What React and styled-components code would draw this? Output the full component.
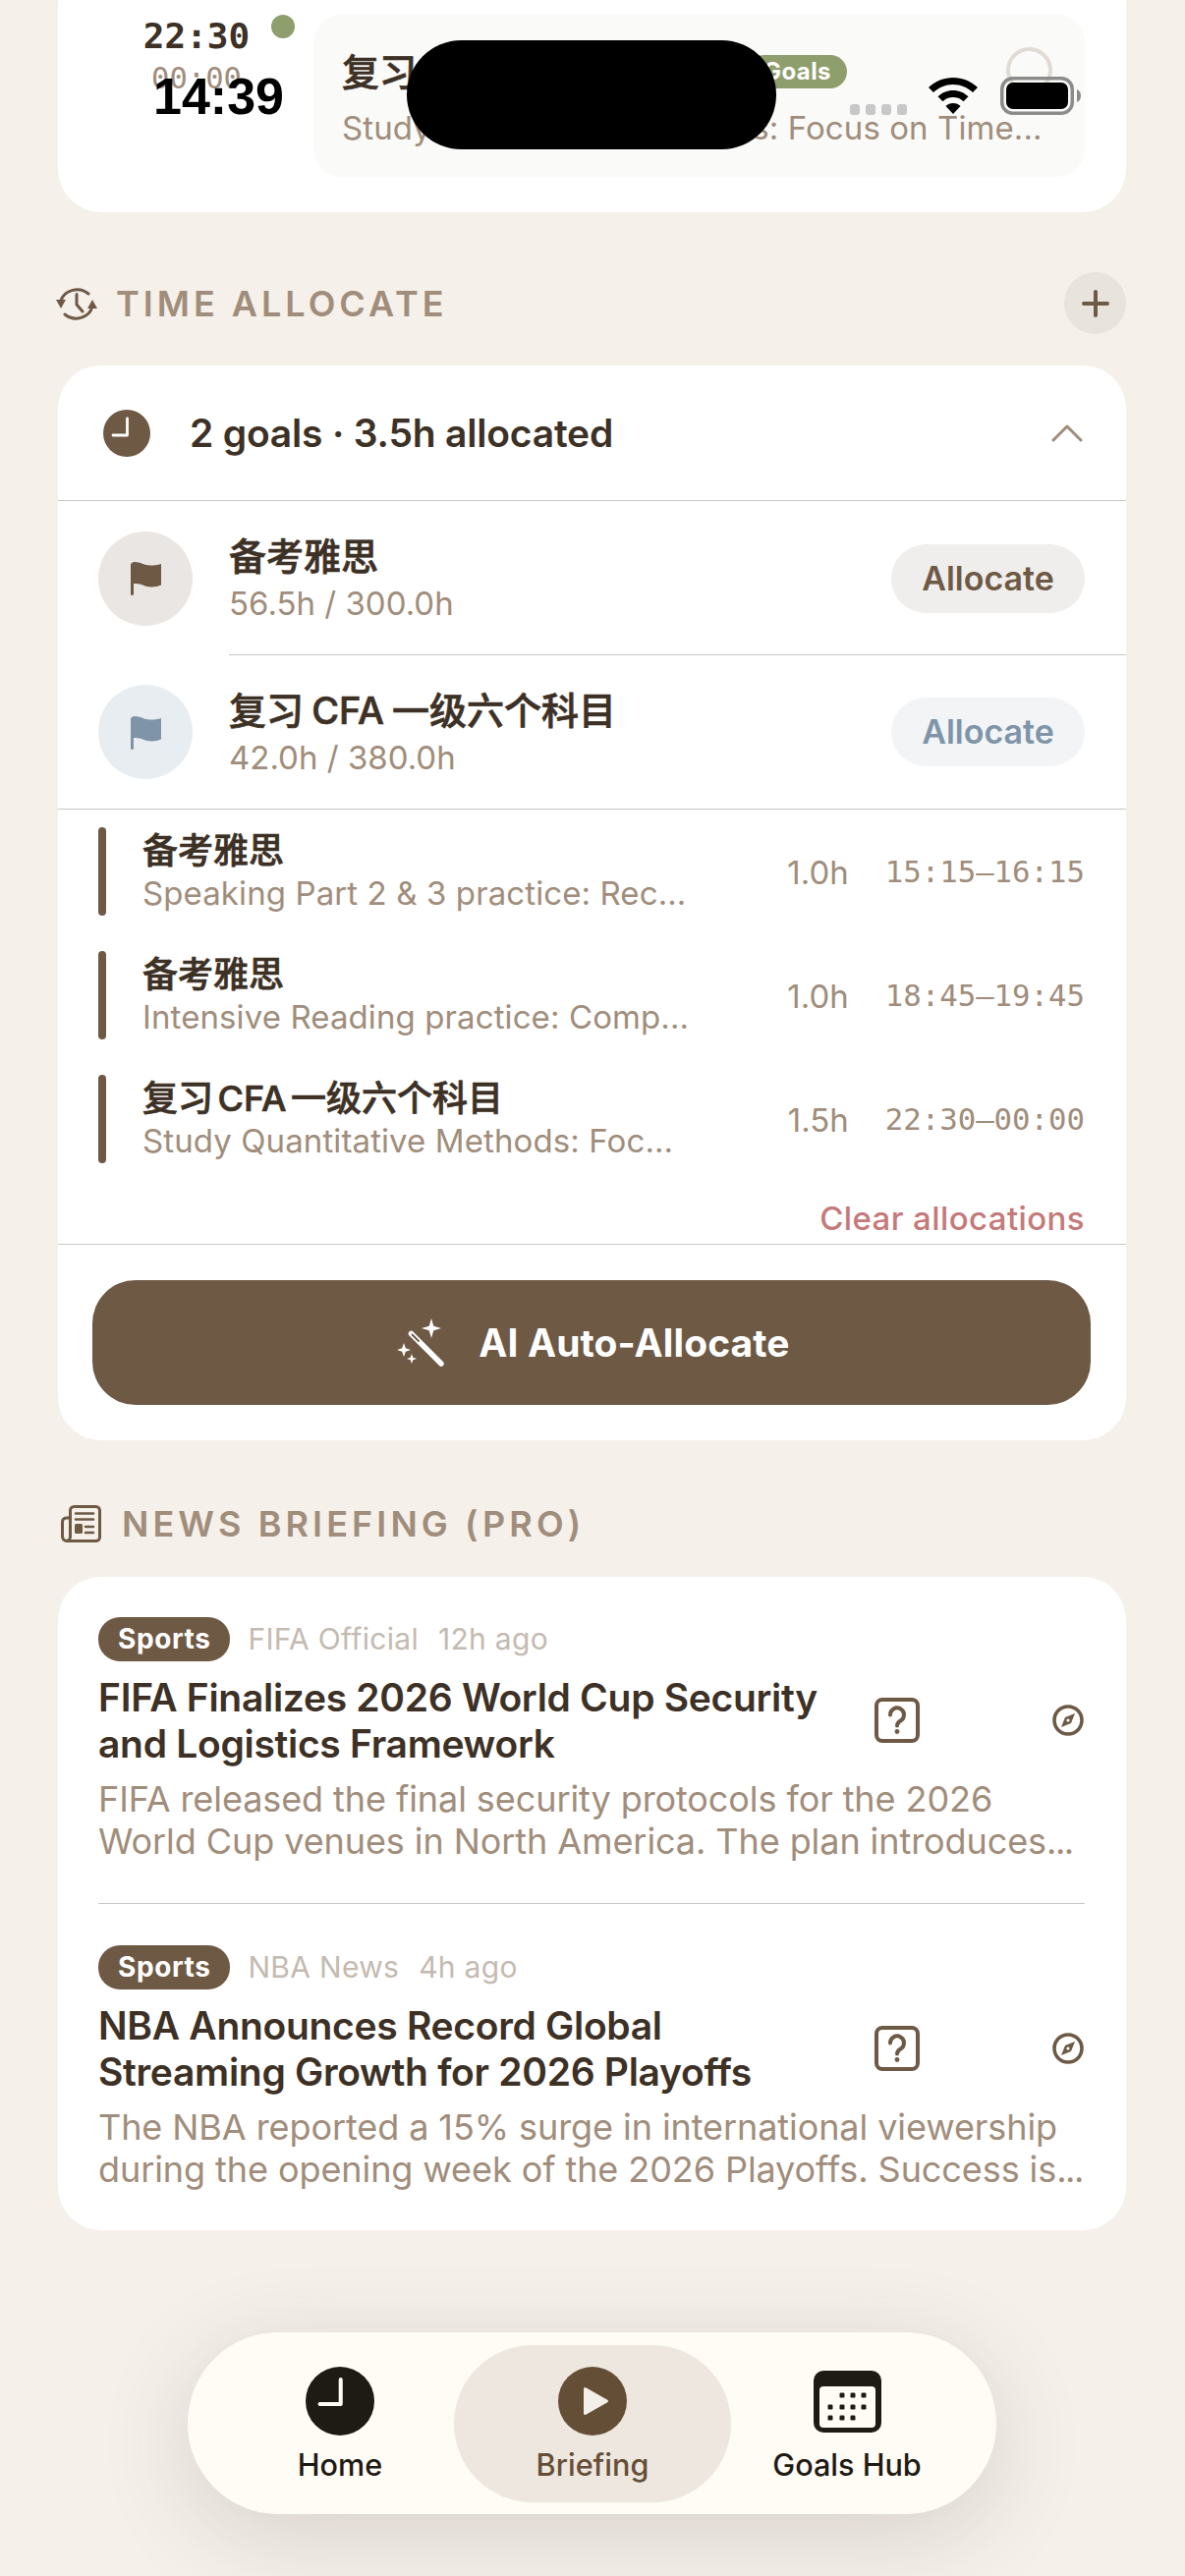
import React from 'react';
import styled, { createGlobalStyle } from 'styled-components';

const Global = createGlobalStyle`
  html, body { margin: 0; padding: 0; background: #f5f0ea; }
  * { box-sizing: border-box; }
`;
const sans = `Inter, "Noto Sans CJK SC", sans-serif`;
const mono = `"DejaVu Sans Mono", monospace`;
const brown = '#6e5945';
const line = '#c8c6c4';
const Page = styled.div`
  position: relative; width: 1206px; height: 2622px; overflow: hidden;
  background: #f5f0ea; font-family: ${sans}; color: #3d3126;
  padding: 0 60px 0 59px;
`;
const Card = styled.section`
  background: #fff; border-radius: 44px; overflow: hidden;
`;
const TopCard = styled(Card)`
  margin-top: -40px; padding: 55px 42px 36px 81px; height: 256px;
  display: flex;
`;
const TimeCol = styled.div`
  width: 120px; display: flex; flex-direction: column; align-items: center; padding-top: 2px;
`;
const TimeStart = styled.div`font: 700 36px/40px ${mono}; color: #3d3126;`;
const TimeEnd = styled.div`font: 400 30.500px/36px ${mono}; color: #a08d7b; margin-top: 5px;`;
const Dot = styled.div`
  width: 24px; height: 24px; border-radius: 50%; background: #8f9e6d; margin: 0 19px 0 16px; flex: none;
`;
const Inner = styled.div`
  flex: 1; min-width: 0; height: 165px; background: #fafaf8; border-radius: 28px;
  padding: 36px 30px 0 29px; display: flex; position: relative;
`;
const InnerText = styled.div`flex: 1; min-width: 0;`;
const InnerTitle = styled.div`
  display: flex; align-items: center; font: 500 38px/44px ${sans}; color: #3d3126; gap: 19px; word-spacing: -2px;
`;
const TitleInk = styled.span`-webkit-text-stroke: .7px #3d3126;`;
const GoalChip = styled.span`
  font: 700 24px/34px ${sans}; color: #fff; background: #8f9e6d; border-radius: 17px; padding: 0 16px; letter-spacing: .4px;
`;
const InnerSub = styled.div`
  font: 400 33px/40px ${sans}; color: #a08d7b; margin-top: 15px; white-space: nowrap; letter-spacing: .08px;
`;
const Ring = styled.div`
  width: 47px; height: 47px; border: 4px solid #e0dbd5; border-radius: 50%;
  position: absolute; right: 33px; top: 33px;
`;
const SectionHead = styled.header`
  display: flex; align-items: center; height: 63px;
`;
const AllocHead = styled(SectionHead)`margin: 61px 0 32px; gap: 19px;`;
const NewsHead = styled(SectionHead)`margin: 53px 0 23px; padding-left: 3px; gap: 20px;`;
const SectionTitle = styled.h2`
  margin: 0; flex: 1; font: 600 36px/44px ${sans}; letter-spacing: ${p => p.$ls}px; color: #a08d7b;
`;
const RoundAdd = styled.button`
  width: 63px; height: 63px; border-radius: 50%; border: 0; background: #e9e3dd; padding: 0;
  display: flex; align-items: center; justify-content: center; color: ${brown};
`;
const SummaryRow = styled.div`
  display: flex; align-items: center; height: 138px; padding: 0 44px 0 46px; border-bottom: 1px solid ${line};
`;
const SummaryText = styled.div`flex: 1; margin-left: 40px; font: 600 39px/48px ${sans}; color: #3d3126; letter-spacing: -.2px;`;
const GoalRow = styled.div`
  display: flex; align-items: center; height: 157px; padding: 0 42px 0 41px; position: relative;
  ${p => p.$line === 'inset' ? `&::after{content:"";position:absolute;left:174px;right:0;bottom:0;height:1px;background:${line};}` : ''}
  ${p => p.$line === 'full' ? `border-bottom: 1px solid ${line};` : ''}
`;
const Avatar = styled.div`
  width: 96px; height: 96px; border-radius: 50%; flex: none; background: ${p => p.$bg};
  display: flex; align-items: center; justify-content: center;
`;
const GoalText = styled.div`flex: 1; margin-left: 37px;`;
const GoalName = styled.div`font: 500 38px/46px ${sans}; color: #3d3126; word-spacing: -2px; -webkit-text-stroke: .7px #3d3126;`;
const GoalMeta = styled.div`font: 400 33px/40px ${sans}; color: #a08d7b; margin-top: 5px;`;
const AllocBtn = styled.button`
  width: 197px; height: 70px; border-radius: 35px; border: 0; background: ${p => p.$bg}; color: ${p => p.$fg};
  font: 600 34px/40px ${sans}; padding: 0;
`;
const AllocList = styled.div`padding: 18px 42px 0 41px; display: flex; flex-direction: column; gap: 36px;`;
const AllocRow = styled.div`display: flex; align-items: center; height: 90px;`;
const Bar = styled.div`width: 8px; height: 90px; border-radius: 4px; background: ${brown}; flex: none;`;
const AllocText = styled.div`width: 600px; margin-left: 37px; flex: none;`;
const AllocName = styled.div`font: 500 36px/42px ${sans}; color: #3d3126; word-spacing: -5px; -webkit-text-stroke: .7px #3d3126;`;
const AllocDesc = styled.div`
  font: 400 33px/40px ${sans}; color: #a08d7b; margin-top: 2px; white-space: nowrap; letter-spacing: .1px;
`;
const Hours = styled.div`font: 400 33px/36px ${sans}; color: #a08d7b; margin: 2px 0 0 auto;`;
const Range = styled.div`font: 400 30.700px/36px ${mono}; color: #a08d7b; margin: 2px 0 0 37px; white-space: nowrap;`;
const ClearRow = styled.div`
  padding: 0 42px 0 0; margin-top: 33px; height: 46px; text-align: right;
  font: 500 33px/46px ${sans}; color: #c47a7a; letter-spacing: .4px;
`;
const Rule = styled.div`height: 1px; background: ${line}; margin-top: ${p => p.$mt || 0}px;`;
const MagicBtn = styled.button`
  display: flex; align-items: center; justify-content: center; gap: 33px;
  width: 1016px; height: 127px; margin: 36px 35px; border: 0; border-radius: 44px;
  background: ${brown}; color: #fff; font: 700 39px/48px ${sans}; padding: 0 0 0 4px; letter-spacing: .1px;
`;
const NewsCard = styled(Card)`padding: 41px 42px 0 41px; height: 665px;`;
const NewsItem = styled.article`
  height: 334px; position: relative;
`;
const Divider = styled.div`height: 1px; background: ${line}; position: absolute; left: 0; right: 0; top: 291px;`;
const Meta = styled.div`display: flex; align-items: center; height: 45px;`;
const Chip = styled.span`
  height: 45px; border-radius: 22px; background: ${brown}; color: #fff; padding: 0 20px;
  font: 700 28px/45px ${sans}; letter-spacing: .6px;
`;
const Source = styled.span`font: 400 30px/45px ${sans}; color: #c4bab0; margin-left: 18px; letter-spacing: .3px;`;
const Age = styled(Source)`margin-left: 20px;`;
const TitleRow = styled.div`display: flex; align-items: center; margin-top: 13px;`;
const NewsTitle = styled.h3`
  margin: 0; width: 750px; font: 600 39px/47px ${sans}; color: #3d3126; letter-spacing: -.3px;
`;
const IconCell = styled.div`display: flex; justify-content: center; width: ${p => p.$w}px; flex: none; margin-left: ${p => p.$ml}px;`;
const NewsDesc = styled.p`
  margin: 12px 0 0; font: 400 36px/43px ${sans}; color: #a08d7b; white-space: pre; letter-spacing: -.08px;
`;
const Dots = styled.span`letter-spacing: -1.500px;`;
const Nav = styled.nav`
  position: absolute; left: 191px; top: 2374px; width: 823px; height: 185px; border-radius: 92px;
  background: #fffbf5; box-shadow: 0 20px 90px rgba(70,60,45,.17);
`;
const NavItem = styled.div`
  position: absolute; top: 13px; height: 160px; border-radius: 80px;
  display: flex; flex-direction: column; align-items: center; padding-top: 22px;
  left: ${p => p.$left}px; width: ${p => p.$w}px;
  background: ${p => p.$active ? '#ede7e0' : 'transparent'};
  color: ${p => p.$active ? '#654e36' : '#1e1a14'};
`;
const NavIcon = styled.div`height: 70px; display: flex; align-items: center;`;
const NavLabel = styled.div`font: 500 30.600px/36px ${sans}; margin-top: 12px; white-space: nowrap;`;
const StatusBar = styled.div`position: absolute; inset: 0 0 auto 0; height: 160px; pointer-events: none;`;
const Clock = styled.div`
  position: absolute; left: 156px; top: 72px; font: 700 52px/52px "Liberation Sans", sans-serif; color: #000;
`;
const Island = styled.div`
  position: absolute; left: 414px; top: 41px; width: 376px; height: 111px; border-radius: 56px; background: #000;
`;
const StatusSlot = styled.div`position: absolute; display: flex; left: ${p => p.$left}px; top: ${p => p.$top}px;`;
const HistorySvg = styled.svg`margin-left: -2px; flex: none;`;

const ClockIcon = ({ size = 48, bg = brown, fg = '#fff' }) => (
  <svg width={size} height={size} viewBox="0 0 48 48">
    <circle cx="24" cy="24" r="24" fill={bg} />
    <path d="M24.500 9V26H10" fill="none" stroke={fg} strokeWidth="2.800" strokeLinecap="round" strokeLinejoin="round" />
  </svg>
);
const Flag = ({ c }) => (
  <svg width="31" height="35" viewBox="0 0 31 35">
    <path d="M0 5C0 2.500 1.500 1 4 1c6 0 10 3.500 16 3.500 4 0 7-.5 11-1.500v21.500c-3 1-6 2-10 2-6 0-10-3.500-16-3.500-2 0-3 .2-5 1z" fill={c} />
    <path d="M1.500 4v29.500" stroke={c} strokeWidth="3" strokeLinecap="round" />
  </svg>
);
const Question = () => (
  <svg width="46" height="46" viewBox="0 0 46 46" fill="none" stroke={brown} strokeWidth="4">
    <rect x="2" y="2" width="42" height="42" rx="6" />
    <path d="M16 17.500a7 7 0 1 1 10.800 5.800c-2.500 1.600-3.800 2.700-3.800 5.200" strokeLinecap="round" />
    <circle cx="23" cy="34.500" r="2.400" fill={brown} stroke="none" />
  </svg>
);
const Compass = () => (
  <svg width="32" height="32" viewBox="0 0 32 32">
    <circle cx="16" cy="16" r="14" fill="none" stroke={brown} strokeWidth="3.600" />
    <path d="M23 9l-4 10-10 4 4-10z" fill={brown} />
    <circle cx="16" cy="16" r="1.600" fill="#fff" />
  </svg>
);
const HistoryIcon = () => (
  <HistorySvg width="42" height="34" viewBox="0 0 42 34" fill="none" stroke={brown} strokeWidth="3" strokeLinecap="round" strokeLinejoin="round">
    <path d="M5 14A17 15.500 0 0 1 33 7" />
    <path d="M37 20A17 15.500 0 0 1 9 28" />
    <path d="M21 7.500V18l6 7" />
    <path d="M0 13h10l-5 9zM32 22h10l-5-9z" fill={brown} stroke="none" />
  </HistorySvg>
);
const NewsIcon = () => (
  <svg width="42" height="38" viewBox="0 0 42 38" fill="none" stroke={brown} strokeWidth="3" strokeLinejoin="round">
    <path d="M9.500 33V5.500a4 4 0 0 1 4-4h22a4 4 0 0 1 4 4v27a4 4 0 0 1-4 4H6A4.500 4.500 0 0 1 1.500 32V17a4 4 0 0 1 4-4h4" />
    <path d="M9.500 32a4.500 4.500 0 0 1-4 4.500" />
    <path d="M15 8.500h18M15 14.500h18M25 22h8M25 28h8" strokeWidth="2.500" strokeLinecap="round" />
    <rect x="14" y="19" width="8" height="10" rx="1.500" fill={brown} stroke="none" />
  </svg>
);
const Wand = () => (
  <svg width="50" height="50" viewBox="0 0 50 50" fill="#fff">
    <path d="M14.500 15.500L45 46" stroke="#fff" strokeWidth="5.500" strokeLinecap="round" />
    <path d="M15.500 16.500L22 23" stroke={brown} strokeWidth="1.800" strokeLinecap="round" />
    <path d="M35 0l2.300 7.700L45 10l-7.700 2.300L35 20l-2.300-7.700L25 10l7.700-2.300z" />
    <path d="M7 25l1.800 5.200L14 32l-5.200 1.800L7 39l-1.800-5.200L0 32l5.200-1.800z" />
    <path d="M15 36l1.300 3.700L20 41l-3.700 1.300L15 46l-1.300-3.700L10 41l3.700-1.300z" />
  </svg>
);
const Calendar = () => (
  <svg width="69" height="63" viewBox="0 0 69 63">
    <rect width="69" height="63" rx="10" fill="#1e1a14" />
    <rect x="6" y="16" width="57" height="42" rx="4" fill="#fffbf5" />
    {[[29,25],[40,25],[51,25],[17,37],[29,37],[40,37],[51,37],[17,48],[29,48],[40,48]].map(([x,y]) => (
      <rect key={`${x}-${y}`} x={x-2.500} y={y-2.500} width="5" height="5" rx="1.200" fill="#1e1a14" />
    ))}
  </svg>
);
const Play = () => (
  <svg width="70" height="70" viewBox="0 0 70 70">
    <circle cx="35" cy="35" r="35" fill="#654e36" />
    <path d="M27.500 22.500L49.500 35 27.500 47.500z" fill="#f3efe9" stroke="#f3efe9" strokeWidth="3" strokeLinejoin="round" />
  </svg>
);
const Wifi = () => (
  <svg width="50" height="37" viewBox="0 0 50 37">
    <path d="M25 0C15.500 0 7 3.600 0 10l5 5c5.500-5 12.300-8 20-8s14.500 3 20 8l5-5C43 3.600 34.500 0 25 0z" />
    <path d="M25 13c-6 0-11.500 2.300-15.500 6.300l5 5C17 21.500 21 20 25 20s8 1.500 10.500 4.300l5-5C36.500 15.300 31 13 25 13z" />
    <path d="M25 26c-3 0-5.500 1-7.500 3L25 37l7.500-8c-2-2-4.500-3-7.500-3z" />
  </svg>
);
const Signal = () => (
  <svg width="58" height="11" viewBox="0 0 58 11" fill="#c8c8c8">
    {[0, 16, 32, 48].map(x => <rect key={x} x={x} y="0" width="10" height="11" rx="3" />)}
  </svg>
);
const Battery = () => (
  <svg width="82" height="39" viewBox="0 0 82 39">
    <rect x="1.750" y="1.750" width="71.500" height="35.500" rx="11" fill="none" stroke="#8c8c8c" strokeWidth="3.500" />
    <rect x="6" y="6" width="63" height="27" rx="7" fill="#000" />
    <path d="M78 13c2.500 1 4 3 4 6.500s-1.500 5.500-4 6.500z" fill="#8c8c8c" />
  </svg>
);

const allocs = [
  ['备考雅思', 'Speaking Part 2 & 3 practice: Rec...', '1.0h', '15:15–16:15'],
  ['备考雅思', 'Intensive Reading practice: Comp...', '1.0h', '18:45–19:45'],
  ['复习 CFA 一级六个科目', 'Study Quantitative Methods: Foc...', '1.5h', '22:30–00:00'],
];
const news = [
  { src: 'FIFA Official', age: '12h ago', title: 'FIFA Finalizes 2026 World Cup Security and Logistics Framework', desc: 'FIFA released the final security protocols for the 2026\nWorld Cup venues in North America. The plan introduces' },
  { src: 'NBA News', age: '4h ago', title: 'NBA Announces Record Global Streaming Growth for 2026 Playoffs', desc: 'The NBA reported a 15% surge in international viewership\nduring the opening week of the 2026 Playoffs. Success is' },
];

export default function App() {
  return (
    <Page>
      <Global />
      <TopCard>
        <TimeCol>
          <TimeStart>22:30</TimeStart>
          <TimeEnd>00:00</TimeEnd>
        </TimeCol>
        <Dot />
        <Inner>
          <InnerText>
            <InnerTitle><TitleInk>复习 CFA 一级六个科目</TitleInk><GoalChip>Goals</GoalChip></InnerTitle>
            <InnerSub>Study Quantitative Methods: Focus on Time...</InnerSub>
          </InnerText>
          <Ring />
        </Inner>
      </TopCard>

      <AllocHead>
        <HistoryIcon />
        <SectionTitle $ls={4}>TIME ALLOCATE</SectionTitle>
        <RoundAdd>
          <svg width="28" height="28" viewBox="0 0 28 28"><path d="M14 2v24M2 14h24" stroke={brown} strokeWidth="4" strokeLinecap="round" /></svg>
        </RoundAdd>
      </AllocHead>

      <Card>
        <SummaryRow>
          <ClockIcon />
          <SummaryText>2 goals · 3.5h allocated</SummaryText>
          <svg width="32" height="18" viewBox="0 0 32 18" fill="none"><path d="M2 16L16 2l14 14" stroke="#a08d7b" strokeWidth="3" strokeLinecap="round" strokeLinejoin="round" /></svg>
        </SummaryRow>
        <GoalRow $line="inset">
          <Avatar $bg="#e9e6e3"><Flag c={brown} /></Avatar>
          <GoalText><GoalName>备考雅思</GoalName><GoalMeta>56.5h / 300.0h</GoalMeta></GoalText>
          <AllocBtn $bg="#f0eeec" $fg={brown}>Allocate</AllocBtn>
        </GoalRow>
        <GoalRow $line="full">
          <Avatar $bg="#e8edf2"><Flag c="#7f94a9" /></Avatar>
          <GoalText><GoalName>复习 CFA 一级六个科目</GoalName><GoalMeta>42.0h / 380.0h</GoalMeta></GoalText>
          <AllocBtn $bg="#f2f4f6" $fg="#7f94a9">Allocate</AllocBtn>
        </GoalRow>
        <AllocList>
          {allocs.map((a, i) => (
            <AllocRow key={i}>
              <Bar />
              <AllocText><AllocName>{a[0]}</AllocName><AllocDesc>{a[1]}</AllocDesc></AllocText>
              <Hours>{a[2]}</Hours>
              <Range>{a[3]}</Range>
            </AllocRow>
          ))}
        </AllocList>
        <ClearRow>Clear allocations</ClearRow>
        <Rule $mt={3} />
        <MagicBtn><Wand />AI Auto-Allocate</MagicBtn>
      </Card>

      <NewsHead>
        <NewsIcon />
        <SectionTitle $ls={4.100}>NEWS BRIEFING (PRO)</SectionTitle>
      </NewsHead>

      <NewsCard>
        {news.map((n, i) => (
          <NewsItem key={i}>
            <Meta><Chip>Sports</Chip><Source>{n.src}</Source><Age>{n.age}</Age></Meta>
            <TitleRow>
              <NewsTitle>{n.title}</NewsTitle>
              <IconCell $w={46} $ml={40}><Question /></IconCell>
              <IconCell $w={32} $ml={135}><Compass /></IconCell>
            </TitleRow>
            <NewsDesc>{n.desc}<Dots>...</Dots></NewsDesc>
            {i === 0 && <Divider />}
          </NewsItem>
        ))}
      </NewsCard>

      <Nav>
        <NavItem $left={60} $w={190}>
          <NavIcon><ClockIcon size={70} bg="#1e1a14" fg="#fffbf5" /></NavIcon>
          <NavLabel>Home</NavLabel>
        </NavItem>
        <NavItem $left={271} $w={282} $active>
          <NavIcon><Play /></NavIcon>
          <NavLabel>Briefing</NavLabel>
        </NavItem>
        <NavItem $left={576} $w={190}>
          <NavIcon><Calendar /></NavIcon>
          <NavLabel>Goals Hub</NavLabel>
        </NavItem>
      </Nav>

      <StatusBar>
        <Clock>14:39</Clock>
        <Island />
        <StatusSlot $left={865} $top={106}><Signal /></StatusSlot>
        <StatusSlot $left={945} $top={79}><Wifi /></StatusSlot>
        <StatusSlot $left={1018} $top={78}><Battery /></StatusSlot>
      </StatusBar>
    </Page>
  );
}
